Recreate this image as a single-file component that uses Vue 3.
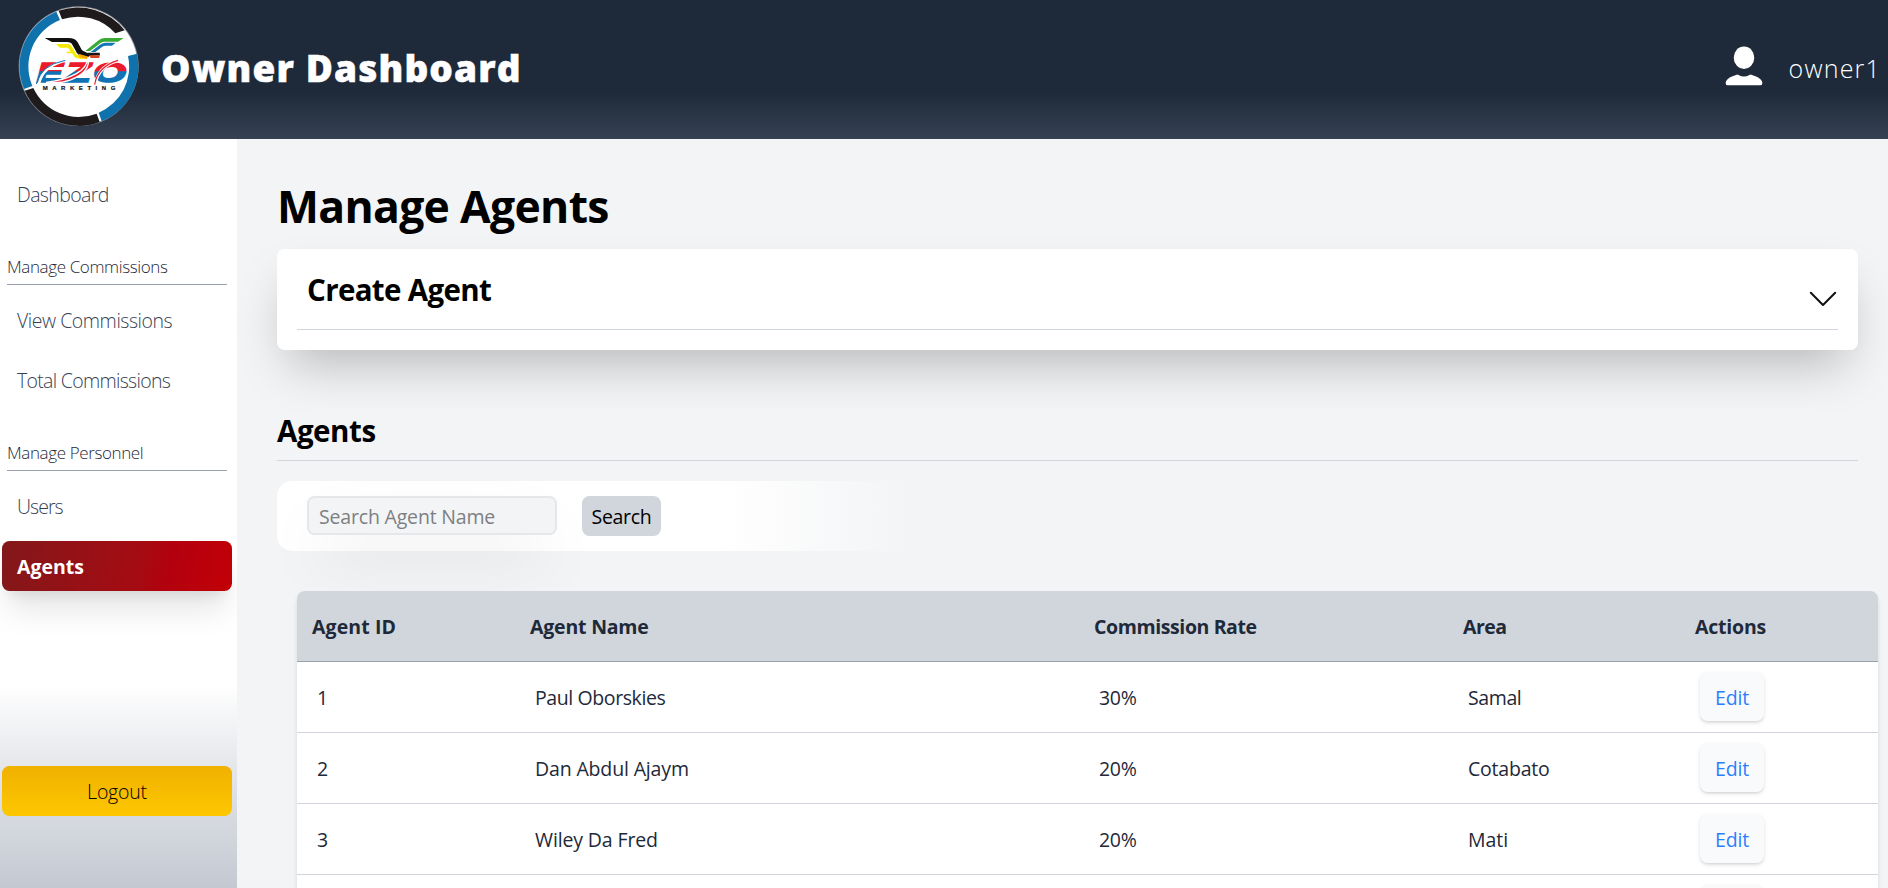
<script setup>
const sections = [
  { title: '', items: [{ label: 'Dashboard', track: -0.62 }] },
  {
    title: 'Manage Commissions',
    items: [{ label: 'View Commissions', track: -0.46 }, { label: 'Total Commissions', track: -0.7 }],
  },
  {
    title: 'Manage Personnel',
    items: [{ label: 'Users', track: -0.95 }, { label: 'Agents', track: 0, active: true }],
  },
]

const columns = [
  { label: 'Agent ID', track: 0.1 },
  { label: 'Agent Name', track: -0.2 },
  { label: 'Commission Rate', track: -0.4 },
  { label: 'Area', track: -0.5 },
  { label: 'Actions', track: -0.2 },
]

const agents = [
  { id: 1, name: 'Paul Oborskies', track: -0.4, rate: '30%', area: 'Samal', areaTrack: -0.4 },
  { id: 2, name: 'Dan Abdul Ajaym', track: -0.15, rate: '20%', area: 'Cotabato', areaTrack: -0.2 },
  { id: 3, name: 'Wiley Da Fred', track: -0.13, rate: '20%', area: 'Mati', areaTrack: 0 },
  { id: 4, name: '', track: 0, rate: '', area: '', areaTrack: 0 },
]

const spacing = (v) => ({ letterSpacing: v + 'px' })
</script>

<template>
  <div class="page">
    <header class="topbar">
      <svg class="logo" viewBox="54 18 366 362">
        <defs>
          <linearGradient id="wordFill" gradientUnits="userSpaceOnUse" x1="0" y1="-60" x2="0" y2="0">
            <stop offset="0.46" stop-color="#ea1c2c" />
            <stop offset="0.5" stop-color="#1173b4" />
          </linearGradient>
        </defs>
        <circle cx="236" cy="199" r="180" fill="#8d9299" />
        <circle cx="236" cy="199" r="177" fill="#fff" />
        <path d="M169 35 A177 177 0 0 0 72 267 L97 258 A150 150 0 0 1 180 60 Z" fill="#0f72ad" />
        <path d="M176 32 A177 177 0 0 1 374 91 L346 100 A150 150 0 0 0 186 58 Z" fill="#1f1a1c" />
        <path d="M411 161 A177 177 0 0 1 305 364 L296 338 A150 150 0 0 0 384 168 Z" fill="#0f72ad" />
        <path d="M74 272 A177 177 0 0 0 299 366 L290 341 A150 150 0 0 1 100 264 Z" fill="#1f1a1c" />
        <path d="M134 114 H205 Q226 114 233 127 L246 151 L272 164 L262 174 L236 164 Q230 160 226 150 L217 134 Q214 126 201 126 H156 Z" fill="#101010" />
        <path d="M168 132 H202 Q212 132 216 141 L230 164 L266 172 L246 178 L226 173 L216 160 H202 L198 155 H212 L204 143 H180 Z" fill="#f4ea00" />
        <path d="M371 114 H316 Q302 114 292 124 L256 153 H270 L302 129 Q307 125 316 125 H354 Z" fill="#3aaa35" />
        <path d="M347 128 H316 Q306 128 298 136 L272 156 H286 L306 141 Q311 137 319 137 H336 Z" fill="#1475b5" />
        <path d="M262 158 L299 158 L300 166 L264 168 Z" fill="#171717" />
        <path d="M268 166 H300 L297 174 H272 Z" fill="#d8431f" />
        <path d="M236 161 L266 170 L262 178 L238 171 Z" fill="#f5a400" />
        <g transform="translate(110 245)">
          <text class="word" x="0" y="0" textLength="78" lengthAdjust="spacingAndGlyphs">E</text>
          <text class="word" x="84" y="0" textLength="78" lengthAdjust="spacingAndGlyphs">Z</text>
          <text class="word" x="170" y="0" textLength="98" lengthAdjust="spacingAndGlyphs">O</text>
        </g>
        <path d="M116 254 Q128 194 206 180" fill="none" stroke="#fff" stroke-width="8" />
        <path d="M109 252 Q120 196 196 181" fill="none" stroke="#1475b5" stroke-width="3" />
        <path d="M264 172 Q274 216 210 240 Q180 251 138 247 Q196 240 229 221 Q263 202 264 172 Z" fill="#ea1c2c" stroke="#fff" stroke-width="4" />
        <path d="M285 256 Q294 194 364 179" fill="none" stroke="#fff" stroke-width="9" />
        <path d="M284 254 Q292 200 354 181" fill="none" stroke="#ea1c2c" stroke-width="3.5" />
        <text class="tag" x="128" y="270" textLength="218">MARKETING</text>
      </svg>
      <h2 class="brand">Owner Dashboard</h2>
      <div class="user">
        <svg class="avatar" viewBox="0 0 38 40" fill="#fff">
          <ellipse cx="19" cy="11.7" rx="10.3" ry="11.2" />
          <path d="M11 29 Q12.2 28.2 13.6 29 Q19 32 24.4 29 Q25.8 28.2 27 29 Q34.500 31 37 35.200 Q38.200 39.300 35 39.300 H3 Q-0.200 39.300 1 35.200 Q3.500 31 11 29 Z" />
        </svg>
        <span>owner1</span>
      </div>
    </header>

    <div class="body">
      <aside class="sidebar">
        <nav>
          <div v-for="s in sections" :key="s.title" class="group">
            <div v-if="s.title" class="group-title">{{ s.title }}</div>
            <a v-for="i in s.items" :key="i.label" class="item" :class="{ active: i.active }" :style="spacing(i.track)">{{ i.label }}</a>
          </div>
        </nav>
        <button class="logout">Logout</button>
      </aside>

      <main class="content">
        <h1>Manage Agents</h1>
        <section class="card">
          <div class="card-head">
            <h3>Create Agent</h3>
            <svg class="chevron" viewBox="0 0 28 16"><path d="M1.800 1.800 L14 14 L26.200 1.800" fill="none" stroke="#111" stroke-width="2" stroke-linecap="round" stroke-linejoin="round" /></svg>
          </div>
        </section>

        <h3 class="subtitle">Agents</h3>

        <div class="search">
          <input type="text" placeholder="Search Agent Name" />
          <button>Search</button>
        </div>

        <div class="table">
          <div class="row head">
            <div v-for="c in columns" :key="c.label" :style="spacing(c.track)">{{ c.label }}</div>
          </div>
          <div v-for="a in agents" :key="a.id" class="row">
            <div>{{ a.name ? a.id : '' }}</div>
            <div :style="spacing(a.track)">{{ a.name }}</div>
            <div class="rate">{{ a.rate }}</div>
            <div :style="spacing(a.areaTrack)">{{ a.area }}</div>
            <div><button class="edit">{{ a.name ? 'Edit' : '' }}</button></div>
          </div>
        </div>
      </main>
    </div>
  </div>
</template>

<style>
body { margin: 0; overflow: hidden; }
</style>

<style scoped>
* { box-sizing: border-box; }
.page {
  width: 100%; height: 888px; display: flex; flex-direction: column; overflow: hidden;
  background: #f3f4f6; color: #000; font-family: "Open Sans", "Noto Sans", sans-serif; font-size: 19.5px;
}
h1, h2, h3 { margin: 0; }
button { border: 0; font: inherit; padding: 0; }
.topbar {
  flex: none; height: 139px; display: flex; align-items: center; padding: 0 10px 0 18px;
  background: linear-gradient(to bottom, #1e2939 0, #1e2939 92px, #364153 139px); color: #fff;
}
.logo { width: 122px; height: 120.700px; margin-bottom: 7px; flex: none; }
.word { font: italic bold 82px "Liberation Sans", sans-serif; fill: url(#wordFill); stroke: url(#wordFill); stroke-width: 5px; }
.tag { font: bold 18px "Liberation Sans", sans-serif; fill: #161616; stroke: #161616; stroke-width: 0.6px; }
.brand { margin-left: 21px; font-size: 37px; font-weight: 800; letter-spacing: 1.150px; line-height: 50px; margin-bottom: 3px; -webkit-text-stroke: 0.5px #fff; }
.user { margin-left: auto; display: flex; align-items: center; font-size: 25px; font-weight: 300; letter-spacing: 1.200px; }
.user span { line-height: 34px; margin-bottom: 4px; margin-right: -3px; }
.avatar { width: 38px; height: 40px; margin-right: 26px; margin-bottom: 8px; }

.body { flex: 1; display: flex; min-height: 0; }
.sidebar {
  flex: none; width: 237px; padding: 30px 5px 72px 2px; display: flex; flex-direction: column; justify-content: space-between;
  overflow: hidden;
  background: linear-gradient(to bottom, #fff 0, #fff 546px, #e5e7eb 626px, #d1d5dc 698px, #c4c8d1 749px);
  font-weight: 300; color: #364153;
}
nav { display: flex; flex-direction: column; gap: 30px; }
.group { display: flex; flex-direction: column; gap: 10px; }
.group-title {
  height: 36px; margin: 0 5px; border-bottom: 1px solid #99a1af; line-height: 36px;
  font-size: 17px; letter-spacing: -0.380px; color: #1e2939;
}
.item { height: 50px; line-height: 52px; padding-left: 15px; border-radius: 7.500px; }
.item.active {
  color: #fff; font-weight: 700;
  background: linear-gradient(100deg, #82181a 0%, #a50b12 60%, #b3000f 72%, #c10007 98%);
  box-shadow: 0 25px 31px -6px rgba(0, 0, 0, 0.1), 0 10px 12.500px -7px rgba(0, 0, 0, 0.1);
}
.logout {
  width: 230px; height: 50px; border-radius: 7.500px; font-weight: 300; letter-spacing: -0.200px; color: #000;
  background: linear-gradient(to bottom, #f0b100, #fdc700);
}

.content { flex: 1; min-width: 0; padding: 42px 10px 0 40px; }
h1 { font-size: 44.500px; line-height: 50px; letter-spacing: -0.700px; font-weight: 700; }
.card {
  height: 101px; margin: 18px 20px 0 0; padding: 0 20px; border-radius: 7.500px; background: #fff;
  box-shadow: 0 25px 50px -12px rgba(0, 0, 0, 0.25);
}
.card-head {
  height: 81px; border-bottom: 1px solid #d1d5dc; padding: 0 1px 0 10px;
  display: flex; align-items: center; justify-content: space-between;
}
h3 { font-size: 29.500px; line-height: 40px; letter-spacing: -0.450px; font-weight: 700; }
.card-head h3 { margin: 2px 0 0; letter-spacing: -0.650px; }
.chevron { width: 28px; height: 16px; margin-top: 19px; }
.subtitle { height: 50px; margin: 61px 20px 0 0; border-bottom: 1px solid #d1d5dc; }
.search {
  width: 790px; height: 70px; margin-top: 20px; padding: 15px 30px; border-radius: 15px 0 0 15px;
  display: flex; align-items: flex-start; gap: 25px;
  background: linear-gradient(to right, #fff 0, #fff 445px, #f3f4f6 635px);
}
.search input {
  width: 250px; height: 39px; border: 2px solid #e5e7eb; border-radius: 7.500px; background: #f3f4f6; outline: 0;
  padding: 2px 10px 0; font: inherit; letter-spacing: -0.180px; box-shadow: 0 31px 62px -15px rgba(0, 0, 0, 0.25);
}
.search input::placeholder { color: #7d7f83; opacity: 1; }
.search button { width: 79px; height: 40px; border-radius: 7.500px; background: #d1d5dc; letter-spacing: -0.300px; }
.table {
  position: relative; margin: 40px 0 0 20px; border-radius: 7.500px 7.500px 0 0; background: #fff; color: #1e2939;
  box-shadow: 0 5px 7.500px -1px rgba(0, 0, 0, 0.1), 0 2.500px 5px -2.500px rgba(0, 0, 0, 0.1);
}
.row {
  height: 71px; border-bottom: 1px solid #d1d5dc; display: grid; align-items: center;
  grid-template-columns: 218px 564px 369px 232px 1fr; padding-left: 20px;
}
.row.head { padding-left: 15px; background: #d1d5dc; border-color: #99a1af; border-radius: 7.500px 7.500px 0 0; font-weight: 700; }
.rate { letter-spacing: -0.300px; }
.edit {
  display: block; width: 64px; height: 48px; border-radius: 7.500px; background: #f9fafb; color: #2b7fff; letter-spacing: -0.200px;
  box-shadow: 0 1.250px 4px rgba(0, 0, 0, 0.1), 0 1.250px 2.500px -1px rgba(0, 0, 0, 0.1);
}
</style>
